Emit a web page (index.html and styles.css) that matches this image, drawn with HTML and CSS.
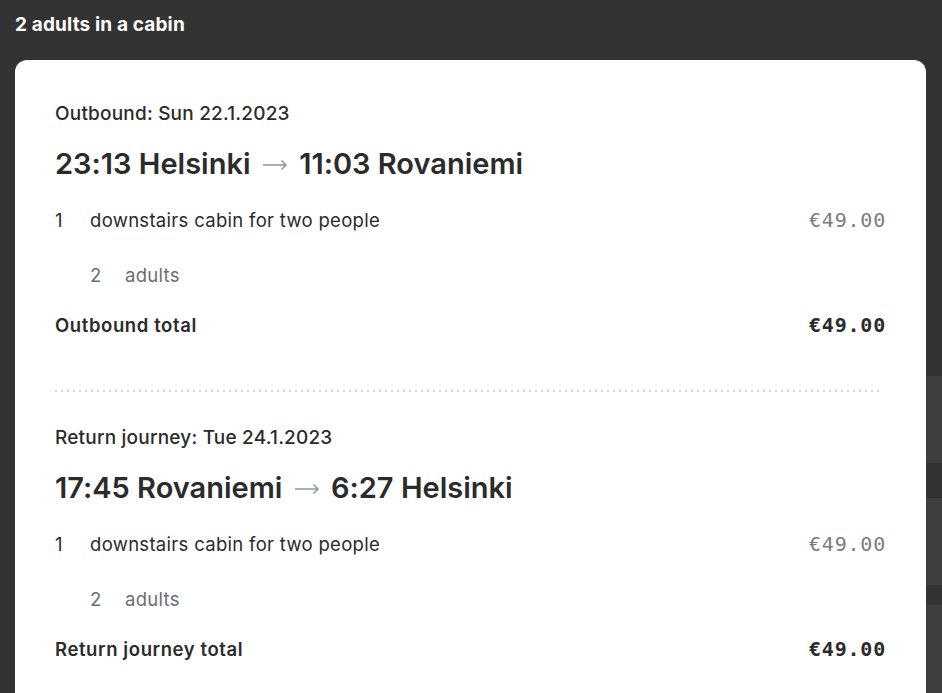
FILE: index.html
```html
<!DOCTYPE html>
<html>
<head>
<meta charset="utf-8">
<link rel="stylesheet" href="styles.css">
</head>
<body>
<div class="page">
  <div class="main">
    <h1 class="title">2 adults in a cabin</h1>
    <div class="card">
      <section class="leg">
        <div class="leg-date">Outbound: Sun 22.1.2023</div>
        <h2 class="leg-route">23:13 Helsinki <svg class="arrow" width="24" height="12" viewBox="0 0 24 12"><path d="M0 6H23M18.5 1.5L23 6L18.5 10.5" fill="none" stroke="#8b95a1" stroke-width="1.5"/></svg> 11:03 Rovaniemi</h2>
        <div class="row item">
          <span class="qty">1</span><span class="desc">downstairs cabin for two people</span><span class="price">€49.00</span>
        </div>
        <div class="row sub">
          <span class="qty">2</span><span class="desc">adults</span>
        </div>
        <div class="row total">
          <span class="desc">Outbound total</span><span class="price">€49.00</span>
        </div>
      </section>
      <div class="divider"></div>
      <section class="leg">
        <div class="leg-date">Return journey: Tue 24.1.2023</div>
        <h2 class="leg-route">17:45 Rovaniemi <svg class="arrow" width="24" height="12" viewBox="0 0 24 12"><path d="M0 6H23M18.5 1.5L23 6L18.5 10.5" fill="none" stroke="#8b95a1" stroke-width="1.5"/></svg> 6:27 Helsinki</h2>
        <div class="row item">
          <span class="qty">1</span><span class="desc">downstairs cabin for two people</span><span class="price">€49.00</span>
        </div>
        <div class="row sub">
          <span class="qty">2</span><span class="desc">adults</span>
        </div>
        <div class="row total">
          <span class="desc">Return journey total</span><span class="price">€49.00</span>
        </div>
      </section>
    </div>
  </div>
  <div class="strip">
    <div class="blk"></div>
    <div class="gapb gap1"></div>
    <div class="blk"></div>
    <div class="gapb gap2"></div>
    <div class="blk last"></div>
  </div>
</div>
</body>
</html>
```

FILE: styles.css
```css
html, body {
  margin: 0;
  padding: 0;
  background: #333333;
  height: 100%;
  overflow: hidden;
}
body {
  font-family: Inter, "Noto Sans", sans-serif;
  font-feature-settings: "calt" 0;
  color: #2b2b2b;
}
.page {
  display: flex;
  align-items: flex-start;
}
.main {
  flex: 1;
  padding-left: 15px;
}
.title {
  margin: 0;
  padding-top: 13px;
  height: 60px;
  box-sizing: border-box;
  font-size: 19px;
  line-height: 24px;
  font-weight: 700;
  color: #ffffff;
  letter-spacing: 0.15px;
}
.card {
  background: #ffffff;
  border-radius: 12px;
  padding: 42px 41px 40px 40px;
  min-height: 700px;
}
.leg-date {
  font-size: 19px;
  line-height: 24px;
  font-weight: 500;
  letter-spacing: 0.2px;
}
.leg-route {
  margin: 20px 0 0;
  font-size: 29px;
  line-height: 36px;
  font-weight: 600;
  letter-spacing: 0;
}
.arrow {
  margin: 0 5px;
  vertical-align: 3px;
}
.row {
  display: flex;
  align-items: center;
  font-size: 18.5px;
  line-height: 24px;
  letter-spacing: 0.3px;
}
.row .qty {
  width: 35px;
}
.row .desc {
  flex: 1;
}
.price {
  font-family: "DejaVu Sans Mono", "Liberation Mono", monospace;
  font-size: 20px;
  letter-spacing: 0.8px;
  margin-right: -1px;
}
.item {
  margin-top: 26px;
  font-weight: 400;
}
.item .price {
  color: #7a7c80;
}
.sub {
  margin-top: 31px;
  padding-left: 35px;
  color: #6b6e73;
}
.total {
  margin-top: 26px;
  font-weight: 600;
}
.total .desc {
  letter-spacing: 0.6px;
}
.total .price {
  font-weight: 700;
  color: #2b2b2b;
}
.divider {
  margin: 53px 3px 34px 0;
  height: 2px;
  background-image: linear-gradient(to right, #d4d4d4 2px, transparent 2px);
  background-size: 6px 2px;
  background-repeat: repeat-x;
}
.strip {
  width: 16px;
  flex: none;
  margin-top: 376px;
  display: flex;
  flex-direction: column;
}
.blk {
  height: 87px;
  background: #3e3e3e;
}
.blk.last {
  height: 120px;
}
.gap1 {
  height: 35px;
}
.gap2 {
  height: 20px;
}
```
